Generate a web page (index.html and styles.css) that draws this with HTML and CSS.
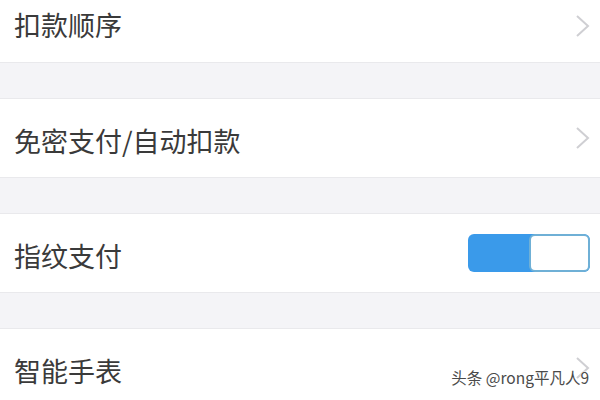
FILE: index.html
```html
<!DOCTYPE html>
<html lang="zh-CN">
<head>
<meta charset="utf-8">
<title>支付设置</title>
<link rel="stylesheet" href="styles.css">
</head>
<body>
<div class="page">
  <div class="row row--cut">
    <span class="label">扣款顺序</span>
    <svg class="chev" viewBox="0 0 15 24" width="15" height="24"><polyline points="2,2 13,12 2,22" fill="none" stroke="#cfcfd3" stroke-width="2"/></svg>
  </div>
  <div class="gap"></div>
  <div class="row">
    <span class="label">免密支付/自动扣款</span>
    <svg class="chev" viewBox="0 0 15 24" width="15" height="24"><polyline points="2,2 13,12 2,22" fill="none" stroke="#cfcfd3" stroke-width="2"/></svg>
  </div>
  <div class="gap"></div>
  <div class="row">
    <span class="label">指纹支付</span>
    <div class="toggle"><span class="toggle-on"></span><span class="toggle-knob"></span></div>
  </div>
  <div class="gap"></div>
  <div class="row">
    <span class="label">智能手表</span>
    <svg class="chev" viewBox="0 0 15 24" width="15" height="24"><polyline points="2,2 13,12 2,22" fill="none" stroke="#cfcfd3" stroke-width="2"/></svg>
  </div>
  <div class="watermark">头条 @rong平凡人9</div>
</div>
</body>
</html>
```
FILE: styles.css
```css
html, body {
  margin: 0;
  padding: 0;
  background: #f4f4f7;
}
.page {
  position: relative;
  width: 600px;
  height: 400px;
  overflow: hidden;
  font-family: "Noto Sans CJK SC", "Noto Sans", sans-serif;
}
.row {
  display: flex;
  align-items: center;
  justify-content: space-between;
  height: 78px;
  padding: 0 10px 0 14px;
  background: #fff;
  border-top: 1px solid #e9e9ec;
  border-bottom: 1px solid #e9e9ec;
}
.row--cut {
  height: 52px;
  padding-bottom: 10px;
  border-top: none;
}
.label {
  font-size: 27px;
  color: #3a3a3a;
  line-height: 1;
  padding-top: 4px;
}
.row--cut .label {
  padding-top: 0;
  padding-bottom: 4px;
}
.gap {
  height: 35px;
}
.chev {
  display: block;
}
.toggle {
  display: flex;
  width: 122px;
  height: 38px;
  border-radius: 6px;
  overflow: hidden;
  background: #3a9aea;
  box-sizing: border-box;
}
.toggle-on {
  flex: 1;
}
.toggle-knob {
  width: 61px;
  background: #fff;
  border: 2px solid #6fb0d6;
  border-radius: 6px;
  box-sizing: border-box;
}
.watermark {
  position: absolute;
  right: 11px;
  bottom: 12px;
  font-size: 15.5px;
  color: #4a4a4a;
  text-shadow: 0 0 2px #fff, 0 0 2px #fff;
  font-family: "Noto Sans CJK SC", sans-serif;
}
```
